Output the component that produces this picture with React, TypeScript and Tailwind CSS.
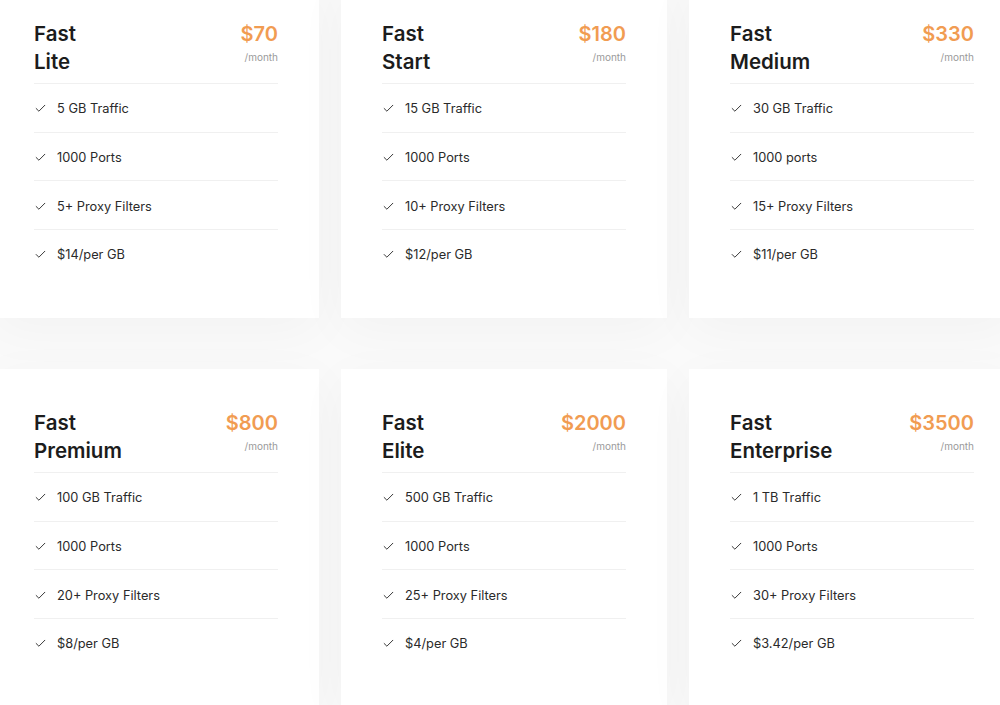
import { Check } from "lucide-react";

const plans = [
  { name: "Lite", price: "$70", features: ["5 GB Traffic", "1000 Ports", "5+ Proxy Filters", "$14/per GB"] },
  { name: "Start", price: "$180", features: ["15 GB Traffic", "1000 Ports", "10+ Proxy Filters", "$12/per GB"] },
  { name: "Medium", price: "$330", features: ["30 GB Traffic", "1000 ports", "15+ Proxy Filters", "$11/per GB"] },
  { name: "Premium", price: "$800", features: ["100 GB Traffic", "1000 Ports", "20+ Proxy Filters", "$8/per GB"] },
  { name: "Elite", price: "$2000", features: ["500 GB Traffic", "1000 Ports", "25+ Proxy Filters", "$4/per GB"] },
  { name: "Enterprise", price: "$3500", features: ["1 TB Traffic", "1000 Ports", "30+ Proxy Filters", "$3.42/per GB"] },
];

function PlanCard({ name, price, features }: { name: string; price: string; features: string[] }) {
  return (
    <div className="bg-white h-[338px] px-[41px] pt-[40px] shadow-[0_12px_50px_rgba(0,0,0,0.035)]">
      <div className="flex justify-between pb-[7px]">
        <h3 className="text-[20.5px] leading-[28px] font-semibold text-[#1c1c1c]">
          Fast
          <br />
          {name}
        </h3>
        <div className="text-right">
          <div className="text-[20px] leading-[28px] font-semibold text-[#f19c52]">{price}</div>
          <div className="mt-[2px] text-[10px] leading-[14px] text-[#9a9a9a]">/month</div>
        </div>
      </div>
      <ul>
        {features.map((f) => (
          <li key={f} className="flex h-[48.7px] items-center gap-[10px] border-t border-[#f0f0f0] pt-[2px] text-[12.8px] text-[#2a2a2a]">
            <Check className="h-[13px] w-[13px] text-[#333]" strokeWidth={1.8} />
            <span>{f}</span>
          </li>
        ))}
      </ul>
    </div>
  );
}

export default function App() {
  return (
    <div className="h-[705px] w-[1000px] overflow-hidden bg-[#fafafa] font-['Inter',sans-serif]">
      <div className="ml-[-7px] mt-[-20px] grid grid-cols-[326px_326px_326px] gap-x-[22px] gap-y-[51px]">
        {plans.map((p) => (
          <PlanCard key={p.name} {...p} />
        ))}
      </div>
    </div>
  );
}
